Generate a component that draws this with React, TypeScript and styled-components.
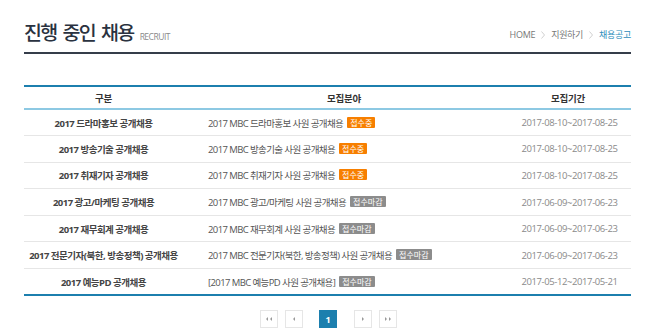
import React from "react";
import styled, { createGlobalStyle } from "styled-components";

const Global = createGlobalStyle`
  html, body { margin: 0; padding: 0; background: #fff; }
  body { font-family: "Open Sans", "Noto Sans CJK KR", sans-serif; }
  * { box-sizing: border-box; }
`;

const Page = styled.div`
  width: 650px;
  padding: 20px 19px 0 24px;
`;

const Head = styled.div`
  display: flex;
  justify-content: space-between;
  align-items: flex-end;
  height: 34px;
  padding-bottom: 8px;
  border-bottom: 2px solid #353d4a;
`;

const TitleWrap = styled.div`
  display: flex;
  align-items: baseline;
  gap: 6px;
`;

const Title = styled.h1`
  margin: 0;
  font-family: "Noto Sans CJK KR", sans-serif;
  font-size: 19.5px;
  font-weight: 500;
  line-height: 24px;
  color: #2a3240;
  letter-spacing: -1.6px;
  word-spacing: 3px;
`;

const Sub = styled.span`
  font-size: 8.5px;
  color: #8a8a8a;
  letter-spacing: -0.5px;
`;

const Crumbs = styled.div`
  display: flex;
  align-items: center;
  gap: 6px;
  font-size: 9px;
  color: #777;
  padding-bottom: 3px;
  letter-spacing: -0.3px;
`;

const Crumb = styled.span<{ $active?: boolean }>`
  color: ${(p) => (p.$active ? "#2d8dbb" : "#777")};
`;

const Sep = styled.svg`
  width: 4px;
  height: 8px;
`;

const Table = styled.table`
  width: 607px;
  margin-top: 31px;
  border-collapse: collapse;
  border-top: 2px solid #1c7fae;
  border-bottom: 2px solid #1c7fae;
  table-layout: fixed;
  font-size: 9.5px;
`;

const Th = styled.th`
  height: 23px;
  font-weight: 700;
  font-size: 9.5px;
  color: #333;
  text-align: center;
  border-bottom: 2px solid #8dc9e3;
  font-family: "Noto Sans CJK KR", sans-serif;
  letter-spacing: -0.3px;
`;

const Tr = styled.tr`
  height: 26.6px;
  border-bottom: 1px solid #e6e6e6;
  &:last-child { border-bottom: none; }
`;

const TdName = styled.td`
  text-align: center;
  font-weight: 700;
  color: #444;
  white-space: nowrap;
  letter-spacing: -0.5px;
`;

const TdField = styled.td`
  padding-left: 25px;
  color: #555;
  white-space: nowrap;
  letter-spacing: -0.6px;
`;

const TdDate = styled.td`
  text-align: center;
  color: #8a8a8a;
  padding-left: 4px;
  letter-spacing: -0.4px;
  white-space: nowrap;
`;

const Badge = styled.span<{ $open: boolean }>`
  display: inline-block;
  margin-left: 4px;
  padding: 0 3px;
  height: 11px;
  line-height: 11px;
  font-size: 8px;
  letter-spacing: 0;
  color: #fff;
  vertical-align: 1px;
  background: ${(p) => (p.$open ? "#f77f00" : "#8c8c8c")};
  border-radius: 1px;
  font-family: "Noto Sans CJK KR", sans-serif;
`;

const Pager = styled.div`
  display: flex;
  justify-content: center;
  align-items: center;
  margin-top: 14px;
  padding-left: 2px;
`;

const PBtn = styled.div<{ $active?: boolean; $gap?: number }>`
  width: 18px;
  height: 18px;
  display: flex;
  align-items: center;
  justify-content: center;
  margin-right: ${(p) => p.$gap ?? 0}px;
  border: 1px solid ${(p) => (p.$active ? "#1c7fae" : "#e6e6e6")};
  background: ${(p) => (p.$active ? "#1c7fae" : "#fff")};
  color: ${(p) => (p.$active ? "#fff" : "#999")};
  font-size: 9px;
  font-weight: 700;
`;

const Arrow = ({ dir, double }: { dir: "l" | "r"; double?: boolean }) => {
  const one = (x: number) =>
    dir === "l" ? `M${x + 2} 0 L${x} 2 L${x + 2} 4 Z` : `M${x} 0 L${x + 2} 2 L${x} 4 Z`;
  return (
    <svg width={double ? 7 : 3} height={4} viewBox={`0 0 ${double ? 7 : 3} 4`}>
      <path d={one(0)} fill="#999" />
      {double && <path d={one(4)} fill="#999" />}
    </svg>
  );
};

const Chevron = () => (
  <Sep viewBox="0 0 4 8">
    <path d="M0.5 0.5 L3.5 4 L0.5 7.5" fill="none" stroke="#c4c4c4" strokeWidth="0.8" />
  </Sep>
);

const rows = [
  ["2017 드라마홍보 공개채용", "2017 MBC 드라마홍보 사원 공개채용", true, "2017-08-10~2017-08-25"],
  ["2017 방송기술 공개채용", "2017 MBC 방송기술 사원 공개채용", true, "2017-08-10~2017-08-25"],
  ["2017 취재기자 공개채용", "2017 MBC 취재기자 사원 공개채용", true, "2017-08-10~2017-08-25"],
  ["2017 광고/마케팅 공개채용", "2017 MBC 광고/마케팅 사원 공개채용", false, "2017-06-09~2017-06-23"],
  ["2017 재무회계 공개채용", "2017 MBC 재무회계 사원 공개채용", false, "2017-06-09~2017-06-23"],
  ["2017 전문기자(북한, 방송정책) 공개채용", "2017 MBC 전문기자(북한, 방송정책) 사원 공개채용", false, "2017-06-09~2017-06-23"],
  ["2017 예능PD 공개채용", "[2017 MBC 예능PD 사원 공개채용]", false, "2017-05-12~2017-05-21"],
] as const;

export default function App() {
  return (
    <Page>
      <Global />
      <Head>
        <TitleWrap>
          <Title>진행 중인 채용</Title>
          <Sub>RECRUIT</Sub>
        </TitleWrap>
        <Crumbs>
          <Crumb>HOME</Crumb>
          <Chevron />
          <Crumb>지원하기</Crumb>
          <Chevron />
          <Crumb $active>채용공고</Crumb>
        </Crumbs>
      </Head>
      <Table>
        <colgroup>
          <col style={{ width: 159 }} />
          <col style={{ width: 322 }} />
          <col style={{ width: 126 }} />
        </colgroup>
        <thead>
          <tr>
            <Th>구분</Th>
            <Th>모집분야</Th>
            <Th>모집기간</Th>
          </tr>
        </thead>
        <tbody>
          {rows.map(([n, f, open, d]) => (
            <Tr key={n}>
              <TdName>{n}</TdName>
              <TdField>
                {f}
                <Badge $open={open}>{open ? "접수중" : "접수마감"}</Badge>
              </TdField>
              <TdDate>{d}</TdDate>
            </Tr>
          ))}
        </tbody>
      </Table>
      <Pager>
        <PBtn $gap={7}><Arrow dir="l" double /></PBtn>
        <PBtn $gap={16}><Arrow dir="l" /></PBtn>
        <PBtn $active $gap={17}>1</PBtn>
        <PBtn $gap={7}><Arrow dir="r" /></PBtn>
        <PBtn><Arrow dir="r" double /></PBtn>
      </Pager>
    </Page>
  );
}
